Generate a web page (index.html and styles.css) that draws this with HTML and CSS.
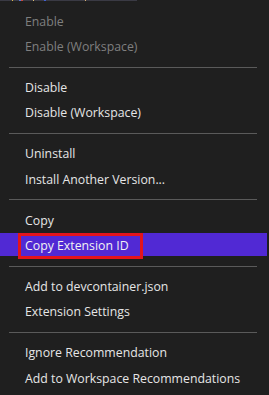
FILE: index.html
```html
<!DOCTYPE html>
<html lang="en">
<head>
    <meta charset="UTF-8">
    <meta name="viewport" content="width=device-width, initial-scale=1.0">
    <title>Extension context menu</title>
    <link rel="stylesheet" href="styles.css">
</head>
<body>
    <div class="top-edge"></div>

    <div class="context-menu">
        <div class="menu-item disabled">Enable</div>
        <div class="menu-item disabled">Enable (Workspace)</div>
        <div class="separator"></div>

        <div class="menu-item">Disable</div>
        <div class="menu-item">Disable (Workspace)</div>
        <div class="separator"></div>

        <div class="menu-item">Uninstall</div>
        <div class="menu-item">Install Another Version...</div>
        <div class="separator"></div>

        <div class="menu-item">Copy</div>
        <div class="menu-item active marked">Copy Extension ID</div>
        <div class="separator"></div>

        <div class="menu-item">Add to devcontainer.json</div>
        <div class="menu-item">Extension Settings</div>
        <div class="separator"></div>

        <div class="menu-item">Ignore Recommendation</div>
        <div class="menu-item">Add to Workspace Recommendations</div>
    </div>
</body>
</html>
```

FILE: styles.css
```css
body {
    margin: 0;
    background: #1f1f1f;
    font-family: "Open Sans", "Noto Sans", sans-serif;
    font-size: 12.3px;
    color: #e6e6e6;
    overflow: hidden;
}

/* Strip of the panel that peeks out above the menu */
.top-edge {
    height: 1px;
    width: 137px;
    background: linear-gradient(to right,
        #3a3a44 0, #3a3a44 12px, #d8b84a 12px, #d8b84a 13px,
        #3a3a44 13px, #3a3a44 19px, #5a7ad0 19px, #5a7ad0 21px,
        #c84a3a 21px, #c84a3a 23px, #3a3a44 23px, #3a3a44 33px,
        #e0c070 33px, #e0c070 34px, #3a3a44 34px, #3a3a44 44px,
        #4060d0 44px, #4060d0 46px, #3a3a44 46px, #3a3a44 85px,
        #d8b070 85px, #d8b070 86px, #3a3a44 86px);
}

.context-menu {
    width: 267px;
    padding-top: 7.7px;
    display: flex;
    flex-direction: column;
}

.menu-item {
    position: relative;
    height: 23px;
    box-sizing: border-box;
    padding: 2px 0 0 25px;
    line-height: 22px;
    white-space: nowrap;
}

.menu-item + .menu-item {
    margin-top: 2.33px;
}

.menu-item.disabled {
    color: #7f7f7f;
}

.menu-item.active {
    background: #5129d4;
    color: #f2f2f2;
}

/* Red annotation box drawn over the highlighted entry */
.menu-item.marked::after {
    content: "";
    position: absolute;
    left: 18px;
    top: 0;
    width: 125px;
    height: 26px;
    border: 3px solid #e4141c;
    box-sizing: border-box;
}

.separator {
    height: 1px;
    margin: 9.5px 10px 7.5px 9px;
    background: #5a5a5a;
}
```
